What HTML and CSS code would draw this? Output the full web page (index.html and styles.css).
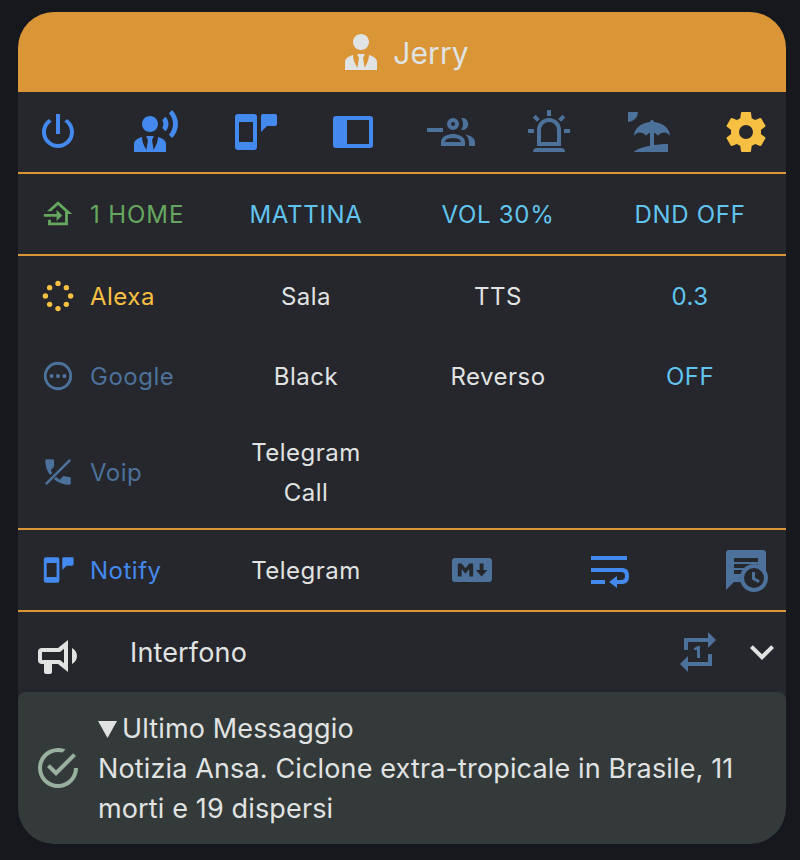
FILE: index.html
```html
<!DOCTYPE html>
<html lang="it">
<head>
<meta charset="utf-8">
<title>Jerry</title>
<link rel="stylesheet" href="styles.css">
</head>
<body>
<main class="card">
  <header class="header">
    <svg class="icon" viewBox="0 0 24 24"><path d="M12 3C14.21 3 16 4.79 16 7S14.21 11 12 11 8 9.21 8 7 9.79 3 12 3M16 13.54C16 14.6 15.72 17.07 13.81 19.83L13 15L13.94 13.12C13.32 13.05 12.67 13 12 13S10.68 13.05 10.06 13.12L11 15L10.19 19.83C8.28 17.07 8 14.6 8 13.54C5.61 14.24 4 15.5 4 17V21H20V17C20 15.5 18.4 14.24 16 13.54Z"/></svg>
    <h1 class="title">Jerry</h1>
  </header>

  <nav class="toolbar ruled">
    <svg class="icon blue" viewBox="0 0 24 24"><path d="M16.56,5.44L15.11,6.89C16.84,7.94 18,9.83 18,12A6,6 0 0,1 12,18A6,6 0 0,1 6,12C6,9.83 7.16,7.94 8.88,6.88L7.44,5.44C5.36,6.88 4,9.28 4,12A8,8 0 0,0 12,20A8,8 0 0,0 20,12C20,9.28 18.64,6.88 16.56,5.44M13,3H11V13H13"/></svg>
    <svg class="icon blue" viewBox="0 0 24 24"><path transform="translate(-3 1)" d="M12 3C14.21 3 16 4.79 16 7S14.21 11 12 11 8 9.21 8 7 9.79 3 12 3M16 13.54C16 14.6 15.72 17.07 13.81 19.83L13 15L13.94 13.12C13.32 13.05 12.67 13 12 13S10.68 13.05 10.06 13.12L11 15L10.19 19.83C8.28 17.07 8 14.6 8 13.54C5.61 14.24 4 15.5 4 17V21H20V17C20 15.5 18.4 14.24 16 13.54Z"/><path d="M16.76,4.36C18.78,6.56 18.78,9.61 16.76,11.63L15.08,9.94C15.92,8.76 15.92,7.23 15.08,6.05L16.76,4.36M20.07,1C24,5.05 23.97,11.11 20.07,15L18.44,13.37C21.21,10.19 21.21,5.65 18.44,2.63L20.07,1Z"/></svg>
    <svg class="icon blue" viewBox="0 0 24 24"><path fill-rule="evenodd" d="M3.5 3H11.5A1.5 1.5 0 0 1 13 4.5V19.5A1.5 1.5 0 0 1 11.5 21H3.5A1.5 1.5 0 0 1 2 19.5V4.5A1.5 1.5 0 0 1 3.5 3M4 7V17H11V7H4M16 3H22A1 1 0 0 1 23 4V8A1 1 0 0 1 22 9H18L15 12V4A1 1 0 0 1 16 3Z"/></svg>
    <svg class="icon blue" viewBox="0 0 24 24"><path fill-rule="evenodd" d="M3.5 4H20.5A1.5 1.5 0 0 1 22 5.5V18.5A1.5 1.5 0 0 1 20.5 20H3.5A1.5 1.5 0 0 1 2 18.5V5.5A1.5 1.5 0 0 1 3.5 4M9 6V18H20V6H9Z"/></svg>
    <svg class="icon dim" viewBox="0 0 24 24"><path fill-rule="evenodd" d="M13 5A3 3 0 1 1 13 11A3 3 0 1 1 13 5M13 7A1 1 0 1 0 13 9A1 1 0 1 0 13 7M24 17V19H21V17C21 15.44 20.24 14.21 19.15 13.23C21.39 13.63 24 14.76 24 17M8 12H0V10H8V12M13 13C11 13 7 14 7 17V19H19V17C19 14 15 13 13 13M9 17C9 16.71 9.32 15 13 15C16.5 15 16.94 16.56 17 17H9M18 8C18 6.94 17.67 5.9 17.06 5.06A3 3 0 1 1 17.06 10.94C17.67 10.1 18 9.06 18 8Z"/></svg>
    <svg class="icon dim" viewBox="0 0 24 24"><path d="M6,6.9L3.87,4.78L5.28,3.37L7.4,5.5L6,6.9M13,1V4H11V1H13M20.13,4.78L18,6.9L16.6,5.5L18.72,3.37L20.13,4.78M4.5,10.5V12.5H1.5V10.5H4.5M19.5,10.5H22.5V12.5H19.5V10.5M6,20H18A2,2 0 0,1 20,22H4A2,2 0 0,1 6,20M12,5A6,6 0 0,1 18,11V19H6V11A6,6 0 0,1 12,5M12,7A4,4 0 0,0 8,11V17H16V11A4,4 0 0,0 12,7Z"/></svg>
    <svg class="icon dim" viewBox="0 0 24 24"><path d="M15,18.54C17.13,18.21 19.5,18 22,18V22H5C5,21.35 8.2,19.86 13,18.9V12.4C12.16,12.65 11.45,13.21 11,13.95C10.39,12.93 9.27,12.25 8,12.25C6.73,12.25 5.61,12.93 5,13.95C5.03,10.37 8.5,7.43 13,7.04V7A1,1 0 0,1 14,6A1,1 0 0,1 15,7V7.04C19.5,7.43 22.96,10.37 23,13.95C22.39,12.93 21.27,12.25 20,12.25C18.73,12.25 17.61,12.93 17,13.95C16.55,13.21 15.84,12.65 15,12.39V18.54M7,2A5,5 0 0,1 2,7V2H7Z"/></svg>
    <svg class="icon yellow" viewBox="0 0 24 24"><path d="M12,15.5A3.5,3.5 0 0,1 8.5,12A3.5,3.5 0 0,1 12,8.5A3.5,3.5 0 0,1 15.5,12A3.5,3.5 0 0,1 12,15.5M19.43,12.97C19.47,12.65 19.5,12.33 19.5,12C19.5,11.67 19.47,11.34 19.43,11L21.54,9.37C21.73,9.22 21.78,8.95 21.66,8.73L19.66,5.27C19.54,5.05 19.27,4.96 19.05,5.05L16.56,6.05C16.04,5.66 15.5,5.32 14.87,5.07L14.5,2.42C14.46,2.18 14.25,2 14,2H10C9.75,2 9.54,2.18 9.5,2.42L9.13,5.07C8.5,5.32 7.96,5.66 7.44,6.05L4.95,5.05C4.73,4.96 4.46,5.05 4.34,5.27L2.34,8.73C2.21,8.95 2.27,9.22 2.46,9.37L4.57,11C4.53,11.34 4.5,11.67 4.5,12C4.5,12.33 4.53,12.65 4.57,12.97L2.46,14.63C2.27,14.78 2.21,15.05 2.34,15.27L4.34,18.73C4.46,18.95 4.73,19.03 4.95,18.95L7.44,17.94C7.96,18.34 8.5,18.68 9.13,18.93L9.5,21.58C9.54,21.82 9.75,22 10,22H14C14.25,22 14.46,21.82 14.5,21.58L14.87,18.93C15.5,18.67 16.04,18.34 16.56,17.94L19.05,18.95C19.27,19.03 19.54,18.95 19.66,18.73L21.66,15.27C21.78,15.05 21.73,14.78 21.54,14.63L19.43,12.97Z"/></svg>
  </nav>

  <section class="row ruled status">
    <div class="label green">
      <svg class="icon small" viewBox="0 0 24 24"><path d="M15 13L11 9V12H2V14H11V17M5 20V16H7V18H17V10.19L12 5.69L7.21 10H4.22L12 3L22 12H19V20H5Z"/></svg>
      <span>1 HOME</span>
    </div>
    <div class="cell cyan">MATTINA</div>
    <div class="cell cyan">VOL 30%</div>
    <div class="cell cyan">DND OFF</div>
  </section>

  <section class="ruled">
    <div class="row">
      <div class="label yellow">
        <svg class="icon small" viewBox="0 0 24 24"><circle cx="12" cy="3.1" r="1.9"/><circle cx="17.9" cy="6.1" r="1.9"/><circle cx="20.9" cy="12" r="1.9"/><circle cx="17.9" cy="17.9" r="1.9"/><circle cx="12" cy="20.9" r="1.9"/><circle cx="6.1" cy="17.9" r="1.9"/><circle cx="3.1" cy="12" r="1.9"/><circle cx="6.1" cy="6.1" r="1.9"/></svg>
        <span>Alexa</span>
      </div>
      <div class="cell">Sala</div>
      <div class="cell">TTS</div>
      <div class="cell cyan">0.3</div>
    </div>
    <div class="row">
      <div class="label dim">
        <svg class="icon small" viewBox="0 0 24 24"><path fill-rule="evenodd" d="M12 2A10 10 0 1 1 12 22A10 10 0 1 1 12 2M12 4A8 8 0 1 0 12 20A8 8 0 1 0 12 4"/><circle cx="7.5" cy="12" r="1.5"/><circle cx="12" cy="12" r="1.5"/><circle cx="16.5" cy="12" r="1.5"/></svg>
        <span>Google</span>
      </div>
      <div class="cell">Black</div>
      <div class="cell">Reverso</div>
      <div class="cell cyan">OFF</div>
    </div>
    <div class="row tall">
      <div class="label dim">
        <svg class="icon small" viewBox="0 0 24 24"><path d="M3 4A1 1 0 0 1 4 3H8.2A1 1 0 0 1 9.2 4C9.2 5.3 9.3 6.5 9.2 7.6C9.2 8 9.1 8.4 8.8 8.7L6.9 10.8C7.2 11.5 7.6 12.1 8 12.7L6.4 14.2C4.3 11.3 3 7.8 3 4Z"/><path d="M10.6 15.3C11.4 16.1 12.3 16.8 13.2 17.4L15.4 15.2C15.7 14.9 16.1 14.8 16.4 14.9C17.5 15.3 18.7 15.5 20 15.5A1 1 0 0 1 21 16.5V20A1 1 0 0 1 20 21C15.8 21 12 19.5 9 16.9Z"/><path class="slash" d="M3.4 20.6L20.6 3.4"/></svg>
        <span>Voip</span>
      </div>
      <div class="cell">Telegram<br>Call</div>
    </div>
  </section>

  <section class="row ruled">
    <div class="label blue">
      <svg class="icon small" viewBox="0 0 24 24"><path fill-rule="evenodd" d="M3.5 3H11.5A1.5 1.5 0 0 1 13 4.5V19.5A1.5 1.5 0 0 1 11.5 21H3.5A1.5 1.5 0 0 1 2 19.5V4.5A1.5 1.5 0 0 1 3.5 3M4 7V17H11V7H4M16 3H22A1 1 0 0 1 23 4V8A1 1 0 0 1 22 9H18L15 12V4A1 1 0 0 1 16 3Z"/></svg>
      <span>Notify</span>
    </div>
    <div class="cell">Telegram</div>
    <div class="options">
      <svg class="icon dim" viewBox="0 0 24 24"><path d="M20.56 18H3.44C2.65 18 2 17.37 2 16.59V7.41C2 6.63 2.65 6 3.44 6H20.56C21.35 6 22 6.63 22 7.41V16.59C22 17.37 21.35 18 20.56 18M6.81 15.19V11.53L8.73 13.88L10.65 11.53V15.19H12.58V8.81H10.65L8.73 11.16L6.81 8.81H4.89V15.19H6.81M19.69 12H17.77V8.81H15.85V12H13.92L16.81 15.28L19.69 12Z"/></svg>
      <svg class="icon blue" viewBox="0 0 24 24"><path d="M21,5H3V7H21V5M3,19H10V17H3V19M3,13H18C19,13 20,13.43 20,15C20,16.57 19,17 18,17H16V15L12,18L16,21V19H18C20.95,19 22,17.73 22,15C22,12.28 21,11 18,11H3V13Z"/></svg>
      <svg class="icon dim" viewBox="0 0 24 24"><path d="M3.5 2H20.5A1.5 1.5 0 0 1 22 3.5V18H6L2 22V3.5A1.5 1.5 0 0 1 3.5 2Z"/><path class="panel" d="M6 6H18V8H6ZM6 9H18V11H6ZM6 12H14V14H6ZM18 18H23V15H18Z"/><circle cx="16" cy="16" r="7"/><circle class="panel" cx="16" cy="16" r="5"/><path d="M15 13H16.5V15.82L18.94 17.23L18.19 18.53L15 16.69V13Z"/></svg>
    </div>
  </section>

  <section class="intercom">
    <svg class="icon horn" viewBox="0 0 24 24"><path d="M12,8H4A2,2 0 0,0 2,10V14A2,2 0 0,0 4,16H5V20A1,1 0 0,0 6,21H8A1,1 0 0,0 9,20V16H12L17,20V4L12,8M15,15.6L13,14H4V10H13L15,8.4V15.6M21.5,12C21.5,13.71 20.54,15.26 19,16V8C20.53,8.75 21.5,10.3 21.5,12Z"/></svg>
    <span class="intercom-name">Interfono</span>
    <svg class="icon dim" viewBox="0 0 24 24"><path d="M13,15V9H12L10,10V11H11.5V15M17,17H7V14L3,18L7,22V19H19V13H17M7,7H17V10L21,6L17,2V5H5V11H7V7Z"/></svg>
    <svg class="icon" viewBox="0 0 24 24"><path d="M7.41,8.58L12,13.17L16.59,8.58L18,10L12,16L6,10L7.41,8.58Z"/></svg>
  </section>

  <section class="message">
    <svg class="icon check" viewBox="0 0 24 24"><path d="M20,12A8,8 0 0,1 12,20A8,8 0 0,1 4,12A8,8 0 0,1 12,4C12.76,4 13.5,4.11 14.2,4.31L15.77,2.74C14.61,2.26 13.34,2 12,2A10,10 0 0,0 2,12A10,10 0 0,0 12,22A10,10 0 0,0 22,12M7.91,10.08L6.5,11.5L11,16L21,6L19.59,4.58L11,13.17L7.91,10.08Z"/></svg>
    <div class="message-body">
      <div class="summary"><svg class="marker" viewBox="0 0 19 17"><path d="M0 0H19L9.5 17Z"/></svg><span>Ultimo Messaggio</span></div>
      <p class="message-text">Notizia Ansa. Ciclone extra-tropicale in Brasile, 11 morti e 19 dispersi</p>
    </div>
  </section>
</main>
</body>
</html>
```
FILE: styles.css
```css
* { box-sizing: border-box; }

body {
  margin: 0;
  padding: 12px 14px 16px 18px;
  background: #17181d;
  color: #e1e3e3;
  font-family: Inter, "Liberation Sans", sans-serif;
  font-size: 24px;
  line-height: 40px;
  letter-spacing: 0.5px;
}

.card {
  width: 768px;
  border-radius: 36px;
  overflow: hidden;
  background: #25272c;
}

.icon {
  display: block;
  flex: none;
  width: 48px;
  height: 48px;
  fill: currentColor;
}
.small { width: 34px; height: 34px; }

.blue { color: #4489ee; }
.dim { color: #4c719b; }
.yellow { color: #f8c043; }
.green { color: #66a75f; }
.cyan { color: #61c4ef; }

.ruled { border-bottom: 2px solid #da9636; }

.header {
  display: flex;
  align-items: center;
  justify-content: center;
  gap: 8px;
  height: 80px;
  padding-left: 2px;
  background: #da9636;
  color: #dfe3e4;
}
.title {
  margin: 0;
  padding-top: 2px;
  font-size: 30px;
  font-weight: 400;
  letter-spacing: 0.1px;
}

.toolbar {
  display: flex;
  align-items: center;
  justify-content: space-between;
  height: 82px;
  padding: 0 16px;
}

.row {
  display: grid;
  grid-template-columns: repeat(4, 192px);
  align-items: center;
  height: 80px;
}
.row.ruled { height: 82px; }
.row.tall { height: 112px; }
.status { letter-spacing: 0.7px; }
.status .label { letter-spacing: 0.9px; }

.label {
  display: flex;
  align-items: center;
  gap: 15px;
  padding-left: 23px;
}
.label span { padding-top: 2px; }
.cell { padding-top: 2px; text-align: center; }

.slash { fill: none; stroke: currentColor; stroke-width: 1.8; }
.panel { fill: #25272c; }

.options {
  grid-column: span 2;
  display: flex;
  justify-content: space-between;
  padding: 0 16px 0 46px;
}

.intercom {
  display: flex;
  align-items: center;
  height: 80px;
  padding-left: 16px;
  font-size: 27px;
  letter-spacing: 0.15px;
}
.horn { margin-top: 7px; }
.intercom-name { flex: 1; padding: 2px 0 0 48px; }
.intercom .dim { margin-right: 16px; }

.message {
  display: flex;
  align-items: center;
  height: 152px;
  padding: 16px;
  border-radius: 8px 8px 36px 36px;
  background: #333a39;
  font-size: 27px;
  letter-spacing: 0.14px;
}
.check { color: #98b09e; }
.message-body { flex: 1; padding: 2px 0 0 16px; }
.summary { display: flex; align-items: center; gap: 5px; }
.marker { width: 19px; height: 17px; fill: currentColor; }
.message-text { margin: 0; }
```
